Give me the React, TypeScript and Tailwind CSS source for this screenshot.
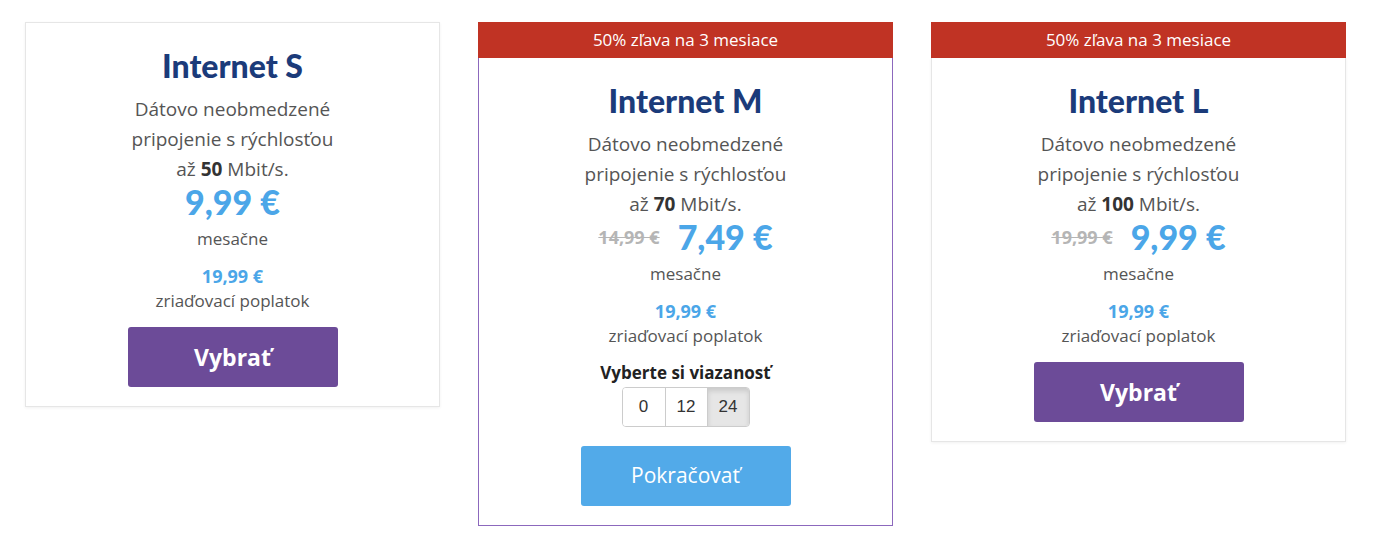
import React from 'react';

type Plan = {
  name: string;
  speed: string;
  price: string;
  oldPrice?: string;
  promo?: boolean;
  active?: boolean;
};

const plans: Plan[] = [
  { name: 'Internet S', speed: '50', price: '9,99 €' },
  { name: 'Internet M', speed: '70', price: '7,49 €', oldPrice: '14,99 €', promo: true, active: true },
  { name: 'Internet L', speed: '100', price: '9,99 €', oldPrice: '19,99 €', promo: true },
];

const body = { fontFamily: '"Open Sans", "Noto Sans", Arial, sans-serif' };
const heavy = { fontFamily: 'Lato, "Open Sans", Arial, sans-serif' };

function Commitment() {
  const opts = ['0', '12', '24'];
  return (
    <div className="mt-[2px] flex justify-center">
      <div className="flex h-[40px] overflow-hidden rounded-[4px] border border-[#cccccc]" style={{ fontFamily: '"Liberation Sans", Arial, sans-serif' }}>
        {opts.map((o, i) => (
          <div
            key={o}
            className={`flex w-[42px] items-center justify-center text-[17px] text-[#333] ${i > 0 ? 'border-l border-[#cccccc]' : ''} ${
              o === '24' ? 'bg-[#e6e6e6] shadow-[inset_0_3px_5px_rgba(0,0,0,0.125)]' : 'bg-white'
            }`}
          >
            {o}
          </div>
        ))}
      </div>
    </div>
  );
}

function PlanCard({ plan }: { plan: Plan }) {
  return (
    <div className="flex w-[415px] flex-col">
      {plan.promo && (
        <div className="flex h-[36px] items-center justify-center bg-[#c03324] text-[17px] text-white">
          50% zľava na 3 mesiace
        </div>
      )}
      <div
        className={`flex flex-col items-center border bg-white pt-[25px] pb-[19px] text-center ${
          plan.active ? 'border-[#8c68bd]' : 'border-[#e6e6e6] shadow-[0_1px_3px_rgba(0,0,0,0.06)]'
        } ${plan.promo ? 'border-t-0' : ''}`}
      >
        <h2 className="text-[32px] leading-[36px] font-black text-[#1b3b7a]" style={heavy}>
          {plan.name}
        </h2>
        <p className="mt-[10px] text-[19px] leading-[30px] text-[#555]">
          Dátovo neobmedzené
          <br />
          pripojenie s rýchlosťou
          <br />
          až <b className="font-bold text-[#333]">{plan.speed}</b> Mbit/s.
        </p>
        <div className="flex items-center justify-center gap-[18px] leading-[36px]">
          {plan.oldPrice && (
            <span className="text-[18px] font-bold text-[#b5b5b5] line-through">{plan.oldPrice}</span>
          )}
          <span className="text-[34px] font-black text-[#4ba6e8]" style={heavy}>
            {plan.price}
          </span>
        </div>
        <div className="mt-[7px] text-[17px] leading-[24px] text-[#555]">mesačne</div>
        <div className="mt-[13px] text-[18px] leading-[24px] font-bold text-[#4ba6e8]">19,99 €</div>
        <div className="mt-[1px] text-[17px] leading-[24px] text-[#555]">zriaďovací poplatok</div>
        {plan.active ? (
          <>
            <div className="mt-[13px] text-[17px] leading-[24px] font-bold text-[#222]">Vyberte si viazanosť</div>
            <Commitment />
            <button className="mt-[19px] h-[60px] w-[210px] rounded-[3px] bg-[#52aae9] text-[21px] text-white">
              Pokračovať
            </button>
          </>
        ) : (
          <button className="mt-[14px] h-[60px] w-[210px] rounded-[3px] bg-[#6c4b98] text-[23px] font-bold text-white">
            Vybrať
          </button>
        )}
      </div>
    </div>
  );
}

export default function App() {
  return (
    <div className="min-h-[539px] bg-white pt-[22px] pl-[25px]" style={body}>
      <div className="flex items-start gap-[38px]">
        {plans.map((p) => (
          <PlanCard key={p.name} plan={p} />
        ))}
      </div>
    </div>
  );
}
